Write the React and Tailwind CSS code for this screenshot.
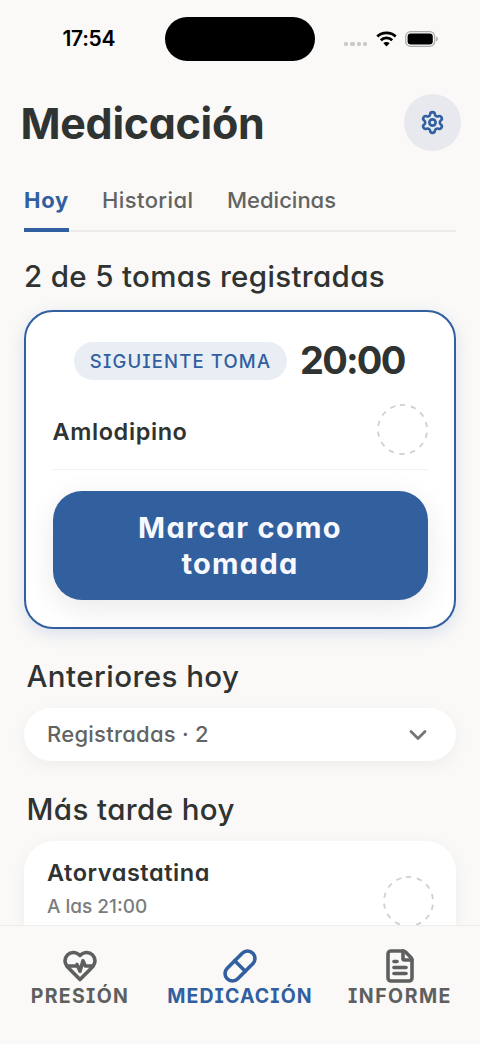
import { ChevronDown, FileText, Pill, Settings } from 'lucide-react'

function HeartPulse({ className, strokeWidth }) {
  return (
    <svg
      className={className}
      viewBox="0 0 24 24"
      fill="none"
      stroke="currentColor"
      strokeWidth={strokeWidth}
      strokeLinecap="round"
      strokeLinejoin="round"
    >
      <path d="M19 14c1.49-1.46 3-3.21 3-5.5A5.5 5.5 0 0 0 16.5 3c-1.76 0-3 .5-4.5 2-1.5-1.5-2.74-2-4.5-2A5.5 5.5 0 0 0 2 8.5c0 2.3 1.5 4.05 3 5.5l7 7Z" />
      <path d="M3.22 12H9.5l.5-1 2 4.5 2-7 1.5 3.5h5.27" />
    </svg>
  )
}

const NAV_ITEMS = [
  { label: 'PRESIÓN', icon: HeartPulse, tracking: 'tracking-[1.3px]' },
  { label: 'MEDICACIÓN', icon: Pill, tracking: 'tracking-[1.1px]', active: true },
  { label: 'INFORME', icon: FileText, tracking: 'tracking-[1.5px]' },
]

function StatusBar() {
  return (
    <div className="flex h-[77px] shrink-0 items-center text-black">
      <div className="w-[165px] pl-[62.5px] text-[21px] font-semibold leading-none tracking-[-0.3px] [font-feature-settings:normal]">
        17:54
      </div>
      <div className="h-[44px] w-[150px] rounded-full bg-black" />
      <div className="ml-[29px] mt-[11px] flex gap-[2.2px]">
        {[0, 1, 2, 3].map((i) => (
          <span key={i} className="size-[4.2px] rounded-[1.4px] bg-[#cacac9]" />
        ))}
      </div>
      <svg className="ml-[9px] h-[16px] w-[21px]" viewBox="0 0 21 16" fill="none" stroke="currentColor">
        <path d="M1.3 5.5C6.3.6 14.7.6 19.7 5.5" strokeWidth="2.7" />
        <path d="M4.8 9.3c3.2-3.2 8.2-3.2 11.4 0" strokeWidth="2.7" />
        <path d="M10.5 15.4 7.4 12.3c1.6-1.8 4.6-1.8 6.2 0Z" fill="currentColor" stroke="none" />
      </svg>
      <svg className="ml-[8px] h-[16px] w-[34px]" viewBox="0 0 34 16" fill="none">
        <rect x="0.7" y="0.7" width="29" height="14.6" rx="4.8" stroke="#aaaaa9" strokeWidth="1.2" />
        <rect x="2.6" y="2.6" width="25.2" height="10.8" rx="3.2" fill="black" />
        <path d="M31.2 5.5c2.2.7 2.2 4.3 0 5Z" fill="#aaaaa9" />
      </svg>
    </div>
  )
}

function PendingCircle() {
  return (
    <svg className="size-[51px] shrink-0" viewBox="0 0 52 52" fill="none">
      <circle cx="26" cy="26" r="25" stroke="#cfcfcf" strokeWidth="1.8" strokeDasharray="5.4 5.82" transform="rotate(-96 26 26)" />
    </svg>
  )
}

function NextDose() {
  return (
    <section className="mt-[13.5px] h-[319.5px] rounded-[29px] border-[2.5px] border-[#315f9f] bg-white px-[26.5px] pt-[30px] shadow-[0_5px_16px_rgba(49,95,180,0.16)]">
      <div className="flex items-center justify-center gap-[14px]">
        <span className="flex h-[38px] w-[213px] items-center justify-center whitespace-nowrap rounded-full bg-[#e9eef5] pt-[2px] text-[18.5px] font-medium tracking-[1.15px] text-[#315f9f]">
          SIGUIENTE TOMA
        </span>
        <span className="-ml-[1px] w-[106px] whitespace-nowrap pb-[2px] text-[38px] font-bold leading-[36px] tracking-[-1.8px]">
          20:00
        </span>
      </div>
      <div className="mt-[11px] flex h-[79px] items-center justify-between border-b border-[#f1f1f1]">
        <span className="pt-[4px] text-[23.5px] font-semibold tracking-[0.6px]">Amlodipino</span>
        <PendingCircle />
      </div>
      <button className="mt-[21.5px] flex h-[109px] w-full items-center justify-center rounded-[29px] bg-[#325f9e] text-[29px] font-bold leading-[36px] tracking-[1.3px] text-[#f8f8ff] shadow-[0_8px_30px_rgba(0,0,0,0.09)]">
        <span>
          Marcar como
          <br />
          tomada
        </span>
      </button>
    </section>
  )
}

function BottomNav() {
  return (
    <nav className="flex h-[119px] shrink-0 border-t-[1.5px] border-[#eeedec] bg-[#faf9f7] pt-[22px]">
      {NAV_ITEMS.map(({ label, icon: Icon, tracking, active }) => (
        <div key={label} className={`flex w-40 flex-col items-center ${active ? 'text-[#315f9f]' : 'text-[#5e605f]'}`}>
          <Icon className="size-[36px]" strokeWidth={2.4} />
          <span className={`mt-[1px] text-[19.5px] font-bold leading-[22px] ${tracking}`}>{label}</span>
        </div>
      ))}
    </nav>
  )
}

export default function App() {
  return (
    <div className="flex h-[1044px] w-[480px] flex-col overflow-hidden bg-[#faf9f7] font-['Inter',sans-serif] text-[#2f3331] [font-feature-settings:'cv11','cv08']">
      <StatusBar />

      <header className="flex h-[91px] shrink-0 items-center justify-between pl-[20.5px] pr-[19px]">
        <h1 className="pt-[2px] text-[43px] font-bold leading-none tracking-[-0.3px]">Medicación</h1>
        <button className="flex size-[57px] items-center justify-center rounded-full bg-[#e7e9ef] pr-[1px] text-[#315f9f]">
          <Settings size={25} strokeWidth={2.5} />
        </button>
      </header>

      <main className="min-h-0 flex-1 overflow-hidden px-6">
        <div className="flex h-[64px] gap-[33px] border-b-2 border-[#ebebea] text-[22px] font-medium text-[#626463]">
          <span className="h-[64px] w-[45px] border-b-[4px] border-[#315f9f] pt-[16px] font-bold tracking-[0.7px] text-[#315f9f]">
            Hoy
          </span>
          <span className="w-[92px] pt-[16px] tracking-[0.4px]">Historial</span>
          <span className="pt-[16px]">Medicinas</span>
        </div>

        <h2 className="mt-[24px] whitespace-nowrap text-[29.5px] font-medium leading-[40px] tracking-[0.35px]">
          2 de 5 tomas registradas
        </h2>

        <NextDose />

        <h2 className="mt-[27px] pl-[2.5px] text-[29.5px] font-medium leading-[40px] tracking-[0.45px]">Anteriores hoy</h2>
        <button className="mt-[12px] flex h-[53px] w-full items-center justify-between rounded-full bg-white pl-[23px] pr-[24px] text-[22px] font-medium tracking-[0.25px] text-[#626463] shadow-[0_4px_16px_rgba(0,0,0,0.05)]">
          Registradas · 2
          <ChevronDown size={28} strokeWidth={2.4} className="text-[#747675]" />
        </button>

        <h2 className="mt-[28px] pl-[2.5px] text-[29.5px] font-medium leading-[40px] tracking-[0.4px]">Más tarde hoy</h2>
        <section className="mt-[12px] flex h-[120px] justify-between rounded-[30px] bg-white pl-[23px] pr-[22px] pt-[16px] shadow-[0_4px_16px_rgba(0,0,0,0.05)]">
          <div>
            <h3 className="text-[23.5px] font-semibold leading-[32px] tracking-[0.55px]">Atorvastatina</h3>
            <p className="mt-[4px] text-[19px] font-medium leading-[28px] text-[#7b7d7c]">A las 21:00</p>
          </div>
          <div className="pt-[19px]">
            <PendingCircle />
          </div>
        </section>
      </main>

      <BottomNav />
    </div>
  )
}
